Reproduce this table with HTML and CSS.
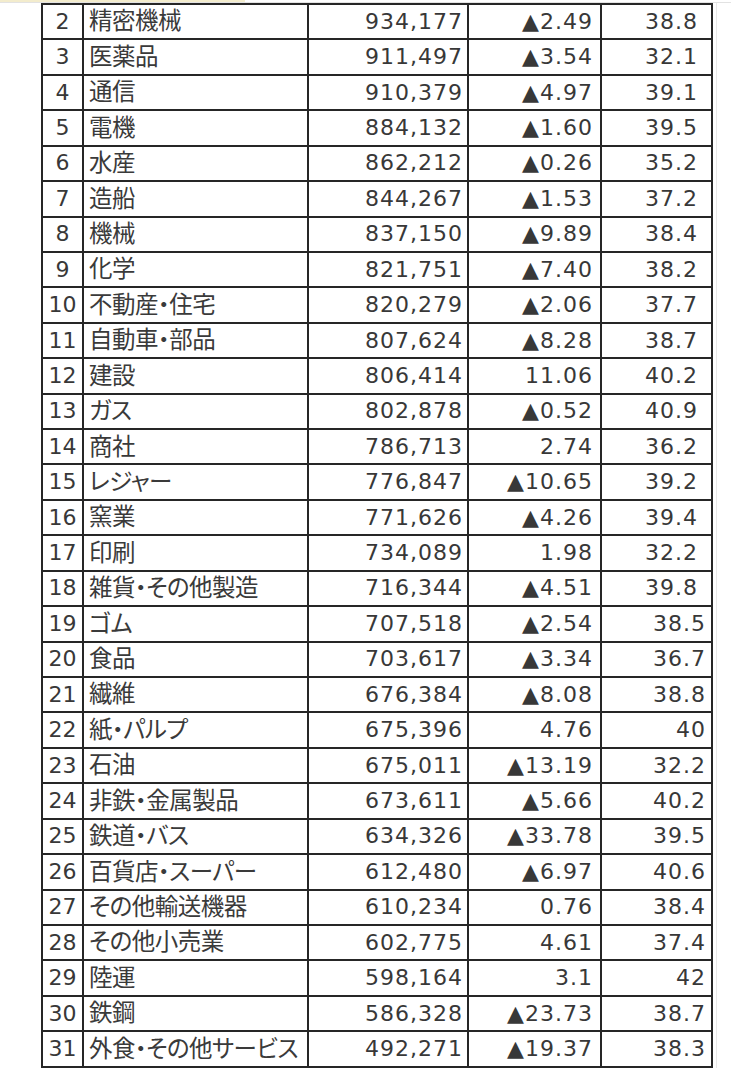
FILE: index.html
```html
<!DOCTYPE html>
<html lang="ja">
<head>
<meta charset="utf-8">
<title>業種別平均年収</title>
<link rel="stylesheet" href="styles.css">
</head>
<body>
<div class="topstrip"></div>
<div class="wrap">
  <div class="grid">
    <div class="c rank">2</div><div class="c name">精密機械</div><div class="c val">934,177</div><div class="c val chg">▲2.49</div><div class="c val age in">38.8</div>
    <div class="c rank">3</div><div class="c name">医薬品</div><div class="c val">911,497</div><div class="c val chg">▲3.54</div><div class="c val age in">32.1</div>
    <div class="c rank">4</div><div class="c name">通信</div><div class="c val">910,379</div><div class="c val chg">▲4.97</div><div class="c val age in">39.1</div>
    <div class="c rank">5</div><div class="c name">電機</div><div class="c val">884,132</div><div class="c val chg">▲1.60</div><div class="c val age in">39.5</div>
    <div class="c rank">6</div><div class="c name">水産</div><div class="c val">862,212</div><div class="c val chg">▲0.26</div><div class="c val age in">35.2</div>
    <div class="c rank">7</div><div class="c name">造船</div><div class="c val">844,267</div><div class="c val chg">▲1.53</div><div class="c val age in">37.2</div>
    <div class="c rank">8</div><div class="c name">機械</div><div class="c val">837,150</div><div class="c val chg">▲9.89</div><div class="c val age in">38.4</div>
    <div class="c rank">9</div><div class="c name">化学</div><div class="c val">821,751</div><div class="c val chg">▲7.40</div><div class="c val age in">38.2</div>
    <div class="c rank">10</div><div class="c name">不動産・住宅</div><div class="c val">820,279</div><div class="c val chg">▲2.06</div><div class="c val age in">37.7</div>
    <div class="c rank">11</div><div class="c name">自動車・部品</div><div class="c val">807,624</div><div class="c val chg">▲8.28</div><div class="c val age in">38.7</div>
    <div class="c rank">12</div><div class="c name">建設</div><div class="c val">806,414</div><div class="c val chg">11.06</div><div class="c val age in">40.2</div>
    <div class="c rank">13</div><div class="c name">ガス</div><div class="c val">802,878</div><div class="c val chg">▲0.52</div><div class="c val age in">40.9</div>
    <div class="c rank">14</div><div class="c name">商社</div><div class="c val">786,713</div><div class="c val chg">2.74</div><div class="c val age in">36.2</div>
    <div class="c rank">15</div><div class="c name">レジャー</div><div class="c val">776,847</div><div class="c val chg">▲10.65</div><div class="c val age in">39.2</div>
    <div class="c rank">16</div><div class="c name">窯業</div><div class="c val">771,626</div><div class="c val chg">▲4.26</div><div class="c val age in">39.4</div>
    <div class="c rank">17</div><div class="c name">印刷</div><div class="c val">734,089</div><div class="c val chg">1.98</div><div class="c val age in">32.2</div>
    <div class="c rank">18</div><div class="c name">雑貨・その他製造</div><div class="c val">716,344</div><div class="c val chg">▲4.51</div><div class="c val age in">39.8</div>
    <div class="c rank">19</div><div class="c name">ゴム</div><div class="c val">707,518</div><div class="c val chg">▲2.54</div><div class="c val age">38.5</div>
    <div class="c rank">20</div><div class="c name">食品</div><div class="c val">703,617</div><div class="c val chg">▲3.34</div><div class="c val age">36.7</div>
    <div class="c rank">21</div><div class="c name">繊維</div><div class="c val">676,384</div><div class="c val chg">▲8.08</div><div class="c val age">38.8</div>
    <div class="c rank">22</div><div class="c name">紙・パルプ</div><div class="c val">675,396</div><div class="c val chg">4.76</div><div class="c val age">40</div>
    <div class="c rank">23</div><div class="c name">石油</div><div class="c val">675,011</div><div class="c val chg">▲13.19</div><div class="c val age">32.2</div>
    <div class="c rank">24</div><div class="c name">非鉄・金属製品</div><div class="c val">673,611</div><div class="c val chg">▲5.66</div><div class="c val age">40.2</div>
    <div class="c rank">25</div><div class="c name">鉄道・バス</div><div class="c val">634,326</div><div class="c val chg">▲33.78</div><div class="c val age">39.5</div>
    <div class="c rank">26</div><div class="c name">百貨店・スーパー</div><div class="c val">612,480</div><div class="c val chg">▲6.97</div><div class="c val age">40.6</div>
    <div class="c rank">27</div><div class="c name">その他輸送機器</div><div class="c val">610,234</div><div class="c val chg">0.76</div><div class="c val age">38.4</div>
    <div class="c rank">28</div><div class="c name">その他小売業</div><div class="c val">602,775</div><div class="c val chg">4.61</div><div class="c val age">37.4</div>
    <div class="c rank">29</div><div class="c name">陸運</div><div class="c val">598,164</div><div class="c val chg">3.1</div><div class="c val age">42</div>
    <div class="c rank">30</div><div class="c name">鉄鋼</div><div class="c val">586,328</div><div class="c val chg">▲23.73</div><div class="c val age">38.7</div>
    <div class="c rank">31</div><div class="c name">外食・その他サービス</div><div class="c val">492,271</div><div class="c val chg">▲19.37</div><div class="c val age">38.3</div>
  </div>
  <div class="gridline"></div>
</div>
</body>
</html>
```

FILE: styles.css
```css
html, body {
  margin: 0;
  padding: 0;
  background: #ffffff;
}

body {
  font-family: "DejaVu Sans", "Noto Sans CJK JP", sans-serif;
  color: #383838;
}

.topstrip {
  height: 3px;
  background:
    linear-gradient(to bottom, transparent 0 2px, #e2e2e2 2px 3px),
    linear-gradient(to right, #f3eccd 0 245px, #ffffff 245px);
}

.wrap {
  display: flex;
  padding-left: 41px;
}

.grid {
  display: grid;
  grid-template-columns: 39px 223px 158px 131px 109px;
  grid-auto-rows: 33.43px;
  gap: 2px;
  padding: 2px;
  background: #262626;
}

.gridline {
  width: 1px;
  margin-left: 3px;
  background: #e8e8e8;
}

.c {
  background: #ffffff;
  display: flex;
  align-items: center;
  font-size: 22px;
  line-height: 1;
  white-space: nowrap;
}

.rank {
  justify-content: center;
}

.name {
  padding-left: 5px;
  padding-bottom: 3px;
  font-family: "Noto Sans CJK JP", "DejaVu Sans", sans-serif;
  font-size: 23.5px;
  letter-spacing: -0.5px;
  font-feature-settings: "palt" 1;
  color: #3a3a3a;
}

.val {
  justify-content: flex-end;
  letter-spacing: 1px;
  padding-right: 4px;
}

.chg {
  padding-right: 7px;
}

.age {
  padding-right: 5px;
}

.age.in {
  padding-right: 13px;
}
```
